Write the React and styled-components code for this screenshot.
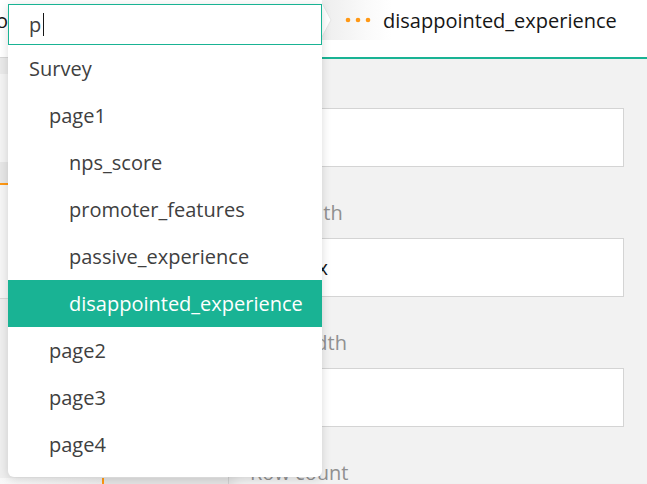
import styled, { createGlobalStyle } from 'styled-components'

const GlobalStyle = createGlobalStyle`
  html, body { margin: 0; padding: 0; height: 100%; overflow: hidden; }
  body {
    font-family: "Open Sans", "Noto Sans", sans-serif;
    background: #fff;
    color: #161616;
  }
  #root { height: 100%; }
`

const Page = styled.div`
  position: relative;
  width: 647px;
  height: 484px;
  display: flex;
  flex-direction: column;
  overflow: hidden;
`

/* ── Top bar / breadcrumbs ── */
const TopBar = styled.div`
  height: 57px;
  flex-shrink: 0;
  background: #fff;
`

const Crumbs = styled.div`
  height: 40px;
  display: flex;
  align-items: stretch;
`

const ClippedCrumb = styled.div`
  width: 8px;
  overflow: hidden;
  display: flex;
  justify-content: flex-end;
  align-items: center;
  font-size: 20px;
  white-space: nowrap;
`

const EditorSlot = styled.div`
  position: relative;
  width: 314px;
  flex-shrink: 0;
`

const CurrentCrumb = styled.div`
  flex: 1;
  display: flex;
  align-items: center;
  background: linear-gradient(90deg, #ededed 0, #fafafa 45px, #fff 70px);
`

const CrumbTitle = styled.span`
  margin-left: 10px;
  font-size: 20px;
  color: #161616;
  white-space: nowrap;
`

/* ── Dropdown ── */
const Dropdown = styled.div`
  position: absolute;
  top: 4px;
  left: 0;
  width: 314px;
  background: #fff;
  border-radius: 0 0 6px 6px;
  box-shadow: 0 2px 10px rgba(0, 0, 0, 0.15);
  padding-bottom: 9px;
  z-index: 10;
`

const SearchBox = styled.div`
  height: 39px;
  border: 1px solid #19b394;
  display: flex;
  align-items: center;
  padding-left: 20px;
  font-size: 20px;
  color: #404040;
`

const Caret = styled.span`
  display: inline-block;
  width: 1px;
  height: 23px;
  margin-left: 2px;
  background: #161616;
`

const Item = styled.div`
  height: 47px;
  display: flex;
  align-items: center;
  padding-left: ${({ $level }) => 21 + $level * 20}px;
  font-size: 20px;
  white-space: nowrap;
  background: ${({ $active }) => ($active ? '#19b394' : 'transparent')};
  color: ${({ $active }) => ($active ? '#fff' : '#404040')};
`

/* ── Body ── */
const Body = styled.div`
  flex: 1;
  display: flex;
  min-height: 0;
`

const LeftColumn = styled.div`
  width: 228px;
  flex-shrink: 0;
  display: flex;
  flex-direction: column;
  border-top: 1px solid #d6d6d6;
  border-right: 1px solid #cfcfcf;
  background: #eeeeee;
`

const LeftBlock = styled.div`
  height: ${({ $h }) => $h}px;
  flex-shrink: 0;
  background: ${({ $bg }) => $bg};
  border-bottom: ${({ $border }) => $border || 'none'};
`

const LeftFooter = styled.div`
  margin-top: auto;
  height: 6px;
  display: flex;
`

const FooterTab = styled.div`
  width: 102px;
  background: linear-gradient(90deg, #f8f8f8, #ececec);
  border-right: 2px solid #ff9814;
`

const FooterRest = styled.div`
  flex: 1;
  background: #e4e4e4;
`

const RightPanel = styled.div`
  flex: 1;
  border-top: 2px solid #19b394;
  background: #f2f2f2;
  box-shadow: inset 14px 0 14px -10px rgba(0, 0, 0, 0.08);
  padding: 12px 23px 0 21px;
  display: flex;
  flex-direction: column;
  gap: 34px;
`

const Field = styled.div`
  display: flex;
  flex-direction: column;
`

const Label = styled.div`
  font-size: 20px;
  line-height: 24px;
  color: #909090;
  margin-bottom: 13px;
`

const ValueBox = styled.div`
  height: 57px;
  border: 1px solid #d4d4d4;
  background: #fff;
  display: flex;
  align-items: center;
  padding-left: 20px;
  font-size: 20px;
  color: #161616;
`

const items = [
  { name: 'Survey', level: 0 },
  { name: 'page1', level: 1 },
  { name: 'nps_score', level: 2 },
  { name: 'promoter_features', level: 2 },
  { name: 'passive_experience', level: 2 },
  { name: 'disappointed_experience', level: 2, active: true },
  { name: 'page2', level: 1 },
  { name: 'page3', level: 1 },
  { name: 'page4', level: 1 },
]

const fields = [
  { label: 'Width', value: '' },
  { label: 'Min width', value: '300px' },
  { label: 'Max width', value: '100%' },
  { label: 'Row count', value: '4' },
]

function Separator() {
  return (
    <svg width="10" height="40" viewBox="0 0 10 40" style={{ flexShrink: 0 }}>
      <polygon points="0,3 9,20 0,37" fill="#fff" />
      <polyline points="0,3 9,20 0,37" fill="none" stroke="#e6e6e6" strokeWidth="1" />
    </svg>
  )
}

function Dots() {
  return (
    <svg width="28" height="6" viewBox="0 0 28 6" style={{ marginLeft: 13, flexShrink: 0 }}>
      <circle cx="3" cy="3" r="2.3" fill="#ff9814" />
      <circle cx="13" cy="3" r="2.3" fill="#ff9814" />
      <circle cx="23" cy="3" r="2.3" fill="#ff9814" />
    </svg>
  )
}

export default function App() {
  return (
    <Page>
      <GlobalStyle />
      <TopBar>
        <Crumbs>
          <ClippedCrumb>po</ClippedCrumb>
          <EditorSlot>
            <Dropdown>
              <SearchBox>
                p<Caret />
              </SearchBox>
              {items.map((it) => (
                <Item key={it.name} $level={it.level} $active={it.active}>
                  {it.name}
                </Item>
              ))}
            </Dropdown>
          </EditorSlot>
          <CurrentCrumb>
            <Separator />
            <Dots />
            <CrumbTitle>disappointed_experience</CrumbTitle>
          </CurrentCrumb>
        </Crumbs>
      </TopBar>

      <Body>
        <LeftColumn>
          <LeftBlock $h={16} $bg="#e9e9e9" />
          <LeftBlock $h={88} $bg="#f3f3f3" />
          <LeftBlock $h={21} $bg="#e6e6e6" $border="2px solid #ff9814" />
          <LeftBlock $h={113} $bg="#f5f5f5" $border="1px solid #d8d8d8" />
          <LeftFooter>
            <FooterTab />
            <FooterRest />
          </LeftFooter>
        </LeftColumn>
        <RightPanel>
          {fields.map((f) => (
            <Field key={f.label}>
              <Label>{f.label}</Label>
              <ValueBox>{f.value}</ValueBox>
            </Field>
          ))}
        </RightPanel>
      </Body>
    </Page>
  )
}
